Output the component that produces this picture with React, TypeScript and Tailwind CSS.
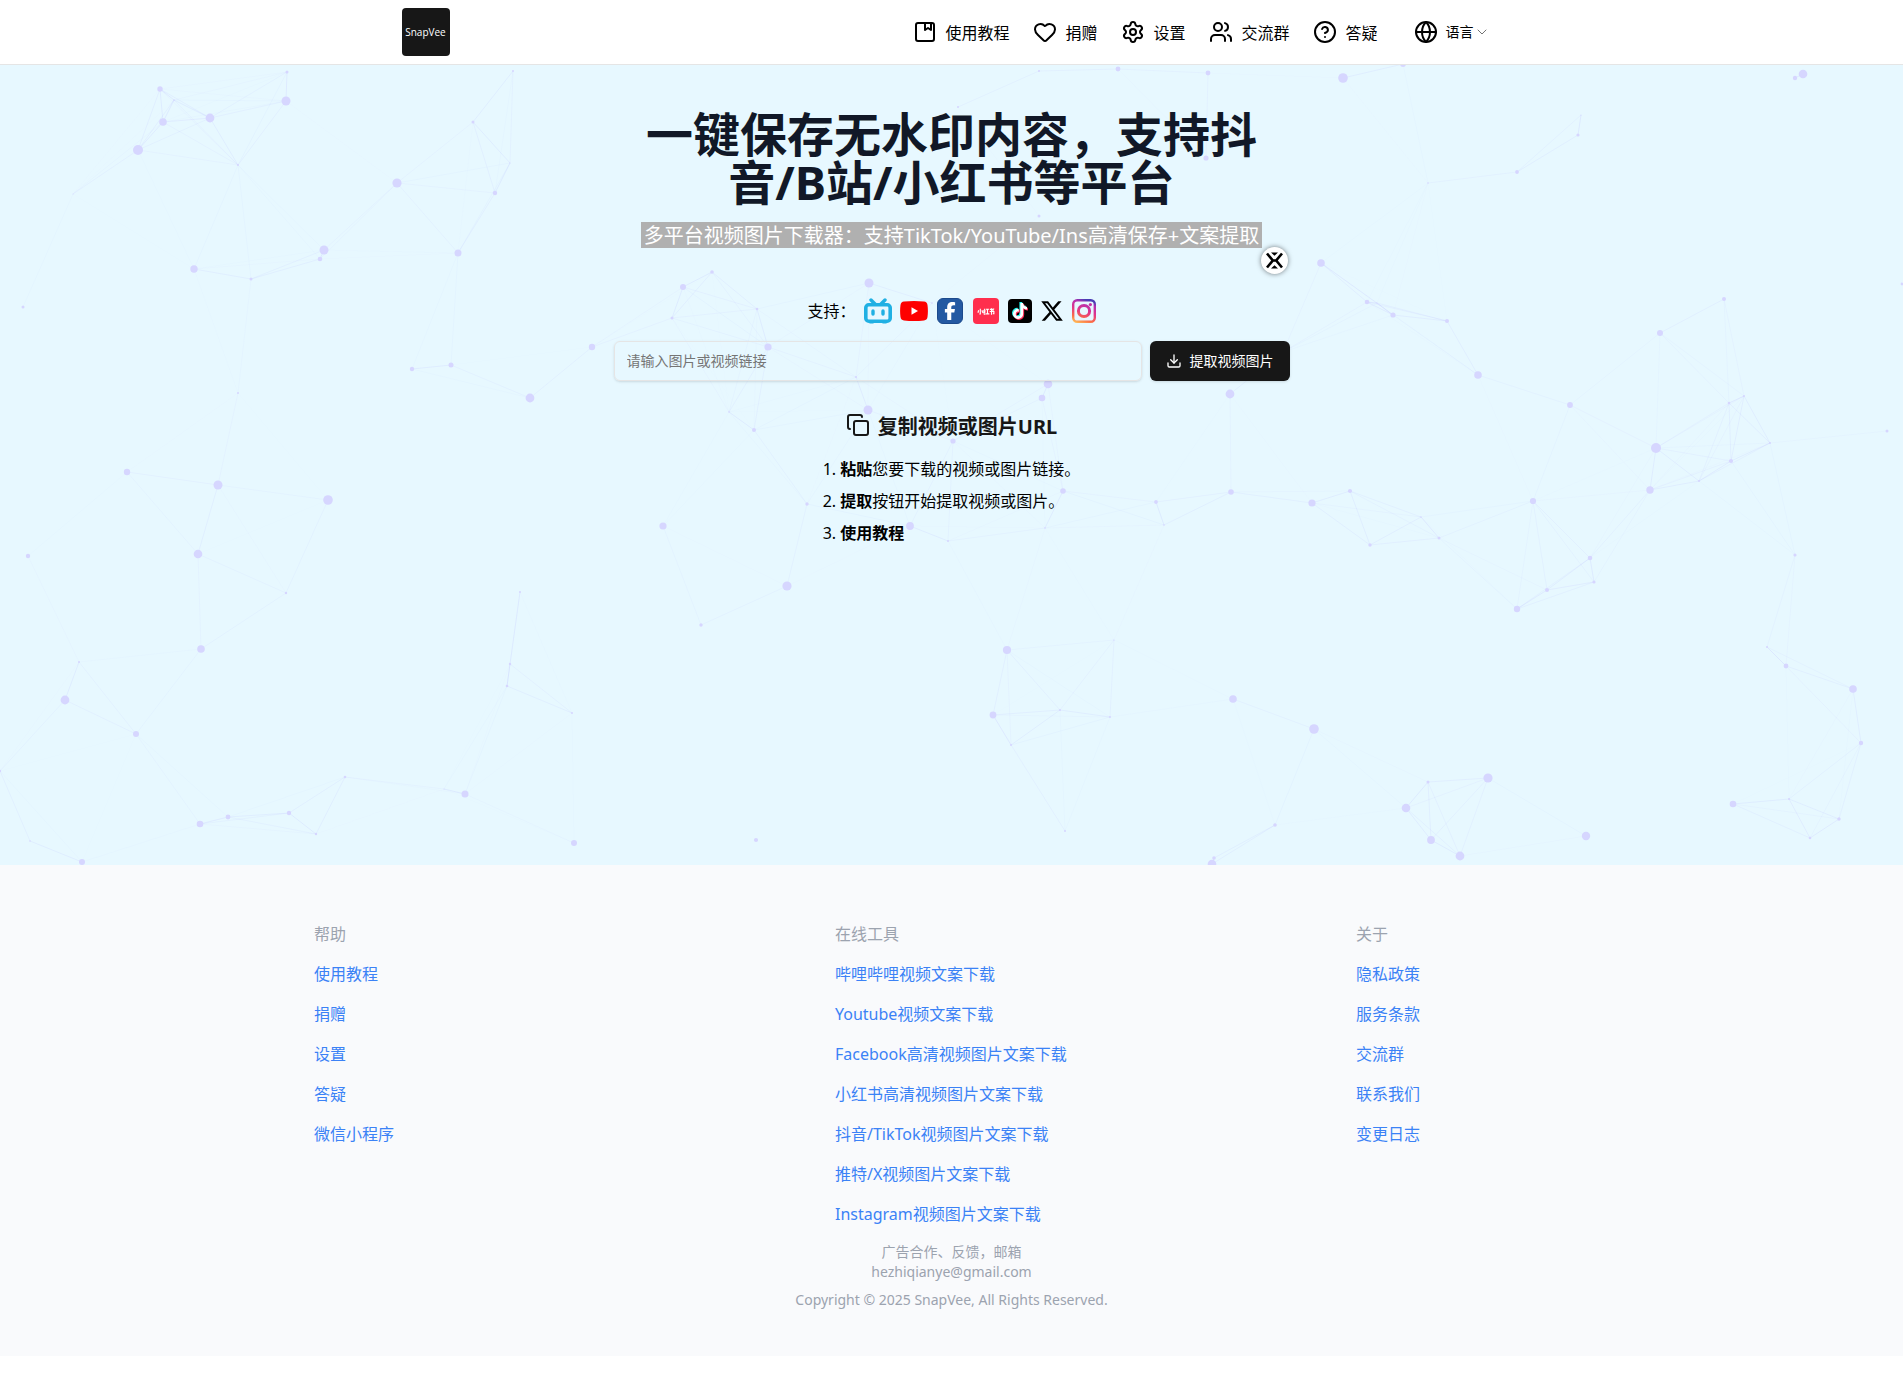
import React from "react";
import {
  ChevronDown,
  CircleHelp,
  Copy,
  Download,
  Globe,
  Heart,
  Settings,
  Users,
} from "lucide-react";
import { FaFacebookF, FaTiktok, FaXTwitter } from "react-icons/fa6";

/* ---------- Particle background ---------- */

type Particle = [x: number, y: number, r: number];

const PARTICLES: Particle[] = [
  [160, 89, 2.7], [287, 72, 1.5], [286, 101, 4.5], [174, 100, 0.7], [163, 122, 3.8],
  [210, 118, 4.4], [138, 150, 5], [238, 165, 1], [73, 194, 0.5], [23, 307, 1.5],
  [194, 269, 3.7], [251, 279, 1.5], [324, 250, 4.5], [320, 259, 2.3], [397, 183, 4.6],
  [473, 122, 1.5], [513, 71, 1], [510, 163, 0.5], [495, 193, 2.2], [458, 253, 3.5],
  [412, 369, 2.2], [451, 365, 2.5], [530, 398, 4.4], [592, 347, 3.2], [238, 393, 1],
  [127, 472, 3.2], [218, 485, 4.5], [328, 500, 4.8], [28, 556, 2.2], [198, 554, 4.3],
  [286, 593, 1.2], [201, 649, 3.8], [79, 662, 1], [65, 700, 4.4], [136, 734, 3],
  [0, 771, 1.2], [30, 841, 0.8], [82, 862, 3], [200, 824, 3.3], [228, 817, 2.4],
  [289, 813, 2.2], [316, 834, 1.2], [345, 777, 1.3], [444, 789, 0.5], [465, 794, 3.5],
  [574, 843, 3], [572, 713, 1], [507, 686, 1.3], [510, 664, 1.2], [520, 592, 1],
  [683, 287, 3], [712, 272, 1.8], [757, 309, 1.3], [672, 318, 1.5], [768, 347, 3.6],
  [729, 412, 0.8], [754, 430, 2], [856, 377, 1], [868, 410, 4.5], [869, 283, 4.5],
  [932, 303, 0.8], [953, 441, 2.6], [1048, 384, 4.3], [1042, 398, 3.3], [1230, 394, 4.4],
  [1063, 491, 2.8], [1156, 502, 1.9], [1164, 525, 0.8], [1045, 528, 0.8], [948, 541, 1],
  [910, 526, 3.9], [807, 504, 1.7], [663, 526, 3.6], [787, 586, 4.6], [701, 625, 1.7],
  [1231, 492, 2.8], [1312, 503, 3.6], [1007, 650, 4.1], [1114, 640, 0.6], [993, 715, 3.4],
  [1060, 710, 1], [1110, 717, 1], [1011, 745, 1], [1065, 831, 1], [1233, 699, 3.8],
  [1314, 729, 4.8], [1275, 825, 1.8], [1214, 858, 1.8], [1212, 864, 4.3], [756, 840, 2.1],
  [1321, 263, 3.8], [958, 107, 1], [1206, 158, 2.6], [1039, 216, 1.5], [1039, 71, 1],
  [1118, 69, 2.4], [1208, 73, 2.4], [1343, 78, 4.8], [1403, 64, 3], [1795, 78, 2.2],
  [1803, 74, 4.3], [1581, 115, 0.6], [1578, 135, 1.6], [1517, 172, 1.9], [1428, 183, 0.8],
  [1367, 302, 2.3], [1393, 315, 2.6], [1377, 303, 0.5], [1447, 321, 2], [1478, 375, 3.8],
  [1570, 405, 2.9], [1660, 333, 3], [1724, 299, 2], [1744, 396, 1], [1729, 403, 1.3],
  [1770, 443, 1], [1887, 431, 1.5], [1656, 448, 5], [1283, 352, 1], [1902, 284, 1.4],
  [1350, 491, 2.1], [1421, 517, 0.7], [1439, 538, 1.5], [1370, 545, 1.7], [1533, 501, 3.1],
  [1650, 490, 3.7], [1699, 481, 1], [1731, 461, 2.1], [1795, 555, 1.6], [1590, 558, 2.3],
  [1594, 582, 1.6], [1547, 590, 2], [1517, 609, 3.2], [1767, 647, 1], [1786, 666, 2.4],
  [1853, 689, 3.8], [1861, 743, 2.2], [1789, 799, 1], [1839, 819, 1.7], [1810, 838, 1.3],
  [1733, 804, 3.3], [1488, 778, 4.6], [1428, 782, 1.5], [1406, 808, 4.3], [1431, 840, 3.9],
  [1460, 856, 4.4], [1586, 836, 4.2],
];

const LINK_DISTANCE = 150;

const LINKS = PARTICLES.flatMap(([x1, y1], i) =>
  PARTICLES.slice(i + 1).flatMap(([x2, y2]) => {
    const d = Math.hypot(x2 - x1, y2 - y1);
    return d < LINK_DISTANCE
      ? [{ x1, y1, x2, y2, opacity: 0.13 * (1 - d / LINK_DISTANCE) }]
      : [];
  }),
);

function ParticleField() {
  return (
    <svg
      className="pointer-events-none absolute inset-0 h-full w-full"
      viewBox="0 65 1903 800"
      preserveAspectRatio="xMidYMin slice"
      aria-hidden="true"
    >
      {LINKS.map((l, i) => (
        <line key={i} x1={l.x1} y1={l.y1} x2={l.x2} y2={l.y2} stroke="#8b7dff" strokeOpacity={l.opacity} />
      ))}
      {PARTICLES.map(([x, y, r], i) => (
        <circle key={i} cx={x} cy={y} r={r} fill="#d6d6ff" />
      ))}
    </svg>
  );
}

/* ---------- Icons ---------- */

function BookIcon() {
  return (
    <svg width="24" height="24" viewBox="0 0 24 24" fill="none" stroke="currentColor" strokeWidth="2" strokeLinecap="round" strokeLinejoin="round" aria-hidden="true">
      <rect x="3" y="3" width="18" height="18" rx="2" />
      <path d="M12 3v7l3-2 3 2V3" />
    </svg>
  );
}

function BilibiliIcon() {
  return (
    <svg width="28" height="26" viewBox="0 0 28 26" fill="none" aria-hidden="true">
      <path d="M7 2l4 4M21 2l-4 4" stroke="#20b0e3" strokeWidth="3.4" strokeLinecap="round" />
      <rect x="1.8" y="6.8" width="24.4" height="16.4" rx="3" stroke="#20b0e3" strokeWidth="3.6" />
      <path d="M6 24.6h3M19 24.6h3" stroke="#20b0e3" strokeWidth="2" strokeLinecap="round" />
      <path d="M9 13v3M19 13v3" stroke="#20b0e3" strokeWidth="3.4" strokeLinecap="round" />
    </svg>
  );
}

function YoutubeIcon() {
  return (
    <svg width="28" height="20" viewBox="0 0 28 20" aria-hidden="true">
      <path d="M4 .6Q14-.4 24 .6q3 .2 3.500 3.400.8 6 0 12-.5 3.200-3.500 3.400-10 1-20 0Q1 19.200.5 16-.3 10 .5 4 1 .8 4 .6z" fill="#fe0000" />
      <path d="M11.500 6.200v7.600l6.500-3.800z" fill="#fff" />
    </svg>
  );
}

function FacebookIcon() {
  return (
    <span className="flex size-[26px] items-center justify-center rounded-md border border-[#1c4a8c] bg-[#2459a2] text-white">
      <FaFacebookF size={18} />
    </span>
  );
}

function XiaohongshuIcon() {
  return (
    <span className="flex size-[26px] items-center justify-center rounded-sm bg-[#ff2e4d]">
      <svg width="18" height="7" viewBox="0 0 20 8" fill="none" stroke="#fff" strokeWidth="1.300" aria-hidden="true">
        <path d="M3.500.8v6H2.400M1.600 2.600L.8 5.400M5.400 2.600l.8 2.800" />
        <path d="M9 .8L7.400 3.400H9L7.400 5.400h2M7.400 7h2M10 1.400h3.400M11.700 1.400V6.600M9.800 6.700h4" />
        <path d="M14.400 1.600h3.600v2M14.200 4h4.800v2.600h-1.200M16.300.4v7.400M18.400.6l.8 1" />
      </svg>
    </span>
  );
}

function TiktokIcon() {
  return (
    <span className="relative block size-6 rounded-sm bg-black">
      <FaTiktok size={16} className="absolute top-[3px] left-[3px] text-[#25f4ee]" />
      <FaTiktok size={16} className="absolute top-[5px] left-[5px] text-[#fe2c55]" />
      <FaTiktok size={16} className="absolute top-1 left-1 text-white" />
    </span>
  );
}

function InstagramIcon() {
  return (
    <svg width="24" height="24" viewBox="0 0 24 24" fill="none" aria-hidden="true">
      <defs>
        <linearGradient id="insta" x1="4" y1="24" x2="12" y2="0" gradientUnits="userSpaceOnUse">
          <stop offset="0" stopColor="#ffc05a" />
          <stop offset="0.250" stopColor="#fb6a48" />
          <stop offset="0.550" stopColor="#e0358a" />
          <stop offset="0.850" stopColor="#b62fb0" />
          <stop offset="1" stopColor="#4a3cb4" />
        </linearGradient>
      </defs>
      <rect x="1.200" y="1.200" width="21.600" height="21.600" rx="4" stroke="url(#insta)" strokeWidth="2.400" />
      <circle cx="12" cy="12" r="5.600" stroke="url(#insta)" strokeWidth="3" />
      <circle cx="18.400" cy="5.600" r="1.600" fill="#c62fa0" />
    </svg>
  );
}

function SelectionMark() {
  return (
    <svg width="17" height="17" viewBox="0 0 17 17" aria-hidden="true">
      <path d="M5 .5h7L8.500 3.800zM5 16.500h7l-3.500-3.300z" fill="#000" />
      <path
        d="M1 1.500L6.800 8.500 1 15.500M16 1.500L10.200 8.500 16 15.500M6.500 8.500h4"
        fill="none"
        stroke="#000"
        strokeWidth="2.600"
      />
    </svg>
  );
}

/* ---------- Page ---------- */

const NAV = [
  { label: "使用教程", icon: <BookIcon /> },
  { label: "捐赠", icon: <Heart size={24} /> },
  { label: "设置", icon: <Settings size={24} /> },
  { label: "交流群", icon: <Users size={24} /> },
  { label: "答疑", icon: <CircleHelp size={24} /> },
];

const PLATFORMS = [
  { name: "Bilibili", icon: <BilibiliIcon />, box: "w-7" },
  { name: "YouTube", icon: <YoutubeIcon />, box: "ml-2 w-7" },
  { name: "Facebook", icon: <FacebookIcon />, box: "ml-2 w-7" },
  { name: "小红书", icon: <XiaohongshuIcon />, box: "ml-2 w-7" },
  { name: "TikTok", icon: <TiktokIcon />, box: "ml-2 w-6" },
  { name: "X", icon: <FaXTwitter size={24} />, box: "ml-2 w-6" },
  { name: "Instagram", icon: <InstagramIcon />, box: "ml-2 w-6" },
];

const FOOTER = [
  { title: "帮助", links: ["使用教程", "捐赠", "设置", "答疑", "微信小程序"] },
  {
    title: "在线工具",
    links: [
      "哔哩哔哩视频文案下载",
      "Youtube视频文案下载",
      "Facebook高清视频图片文案下载",
      "小红书高清视频图片文案下载",
      "抖音/TikTok视频图片文案下载",
      "推特/X视频图片文案下载",
      "Instagram视频图片文案下载",
    ],
  },
  { title: "关于", links: ["隐私政策", "服务条款", "交流群", "联系我们", "变更日志"] },
];

function Header() {
  return (
    <header className="border-b border-[#e5e5e5] bg-white">
      <div className="mx-auto flex h-16 max-w-[1100px] items-center justify-between">
        <a href="#" className="flex size-12 items-center justify-center rounded bg-[#171717] font-['Open_Sans'] text-[10px] text-white">
          SnapVee
        </a>
        <nav className="flex items-center gap-6 text-base text-black">
          {NAV.map((item) => (
            <a key={item.label} href="#" className="flex items-center gap-2">
              {item.icon}
              <span className="pt-0.5">{item.label}</span>
            </a>
          ))}
          <button type="button" className="flex items-center gap-2 px-3">
            <Globe size={24} />
            <span className="flex items-center text-sm">
              语言
              <ChevronDown size={16} strokeWidth={1.5} className="text-neutral-500" />
            </span>
          </button>
        </nav>
      </div>
    </header>
  );
}

function Hero() {
  return (
    <main className="relative min-h-[800px] bg-[#e7f8ff]">
      <ParticleField />
      <div className="relative mx-auto flex max-w-[676px] flex-col items-center pt-[45px]">
        <h1 className="max-w-[640px] text-center text-[47px] leading-[48px] font-bold text-[#111827]">
          一键保存无水印内容，支持抖音/B站/小红书等平台
        </h1>
        <div className="relative mt-4">
          <p className="bg-[#b0b0b0] px-[3px] pt-0.5 text-xl leading-6 text-white">
            多平台视频图片下载器：支持TikTok/YouTube/Ins高清保存+文案提取
          </p>
          <button
            type="button"
            aria-label="翻译所选文字"
            className="absolute top-full left-full -mt-px -ml-px flex size-[27px] items-center justify-center rounded-full bg-white shadow-[0_0_5px_rgba(0,0,0,0.5)]"
          >
            <SelectionMark />
          </button>
        </div>
        <div className="mt-[49px] flex h-7 items-center text-black">
          <span className="mr-2">支持：</span>
          {PLATFORMS.map((p) => (
            <a key={p.name} href="#" aria-label={p.name} className={`flex justify-center ${p.box}`}>
              {p.icon}
            </a>
          ))}
        </div>
        <form className="mt-4 flex w-full gap-2" onSubmit={(e) => e.preventDefault()}>
          <input
            type="text"
            aria-label="图片或视频链接"
            placeholder="请输入图片或视频链接"
            className="h-10 min-w-0 flex-1 rounded-md border border-[#e5e5e5] bg-transparent px-3 pb-0.5 text-sm shadow-sm placeholder:text-[#757575]"
          />
          <button
            type="submit"
            className="flex h-10 items-center gap-2 rounded-md bg-[#171717] px-4 text-sm text-white shadow"
          >
            <Download size={16} />
            提取视频图片
          </button>
        </form>
        <h2 className="mt-8 flex items-start gap-2 text-xl leading-7 font-bold text-[#171717]">
          <Copy size={24} />
          <span>复制视频或图片URL</span>
        </h2>
        <ol className="mt-3 list-inside list-decimal text-base leading-8 text-black">
          <li>
            <b>粘贴</b>您要下载的视频或图片链接。
          </li>
          <li>
            <b>提取</b>按钮开始提取视频或图片。
          </li>
          <li>
            <a href="#" className="font-bold">
              使用教程
            </a>
          </li>
        </ol>
      </div>
    </main>
  );
}

function Footer() {
  return (
    <footer className="bg-[#f9fafc] pt-[57px] pb-[46px] text-[#9ca3af]">
      <div className="grid grid-cols-3 pr-[26px] pl-[314px]">
        {FOOTER.map((col) => (
          <section key={col.title}>
            <h3>{col.title}</h3>
            <ul className="mt-4 flex flex-col gap-4">
              {col.links.map((link) => (
                <li key={link}>
                  <a href="#" className="text-[#3b82f6]">
                    {link}
                  </a>
                </li>
              ))}
            </ul>
          </section>
        ))}
      </div>
      <div className="mt-4 text-center text-sm">
        <p>广告合作、反馈，邮箱</p>
        <p>
          <a href="mailto:hezhiqianye@gmail.com">hezhiqianye@gmail.com</a>
        </p>
        <p className="mt-2">Copyright © 2025 SnapVee, All Rights Reserved.</p>
      </div>
    </footer>
  );
}

export default function App() {
  return (
    <div lang="zh-CN" className="bg-white font-['Noto_Sans','Noto_Sans_CJK_SC',sans-serif]">
      <Header />
      <Hero />
      <Footer />
    </div>
  );
}
